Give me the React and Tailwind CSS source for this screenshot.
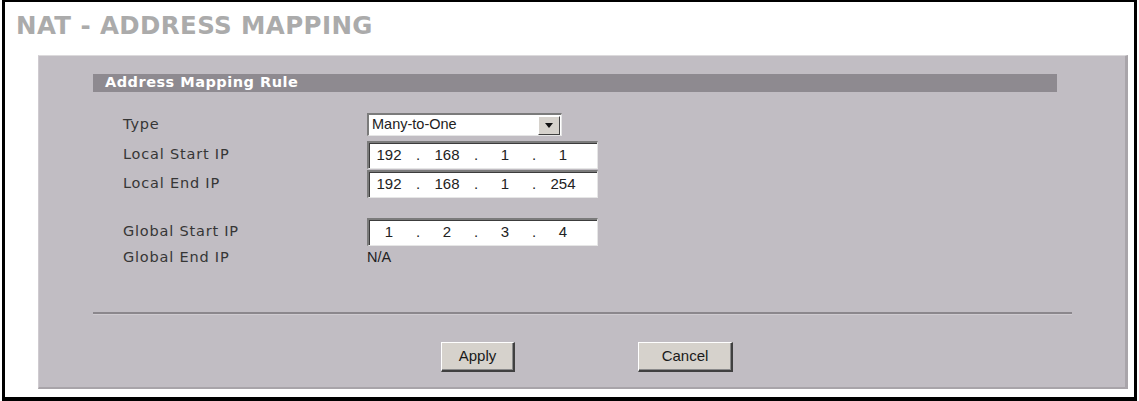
import React from 'react';

const labelFont = { fontFamily: '"DejaVu Sans", Verdana, sans-serif' };
const ctrlFont = { fontFamily: '"Liberation Sans", Arial, sans-serif' };

function IpBox({ parts }) {
    return (
        <div
            className="flex items-center w-[231px] h-[28px] bg-white border-t-2 border-l-2 border-b border-r border-t-[#7b7b7b] border-l-[#7b7b7b] border-b-[#e6e6e6] border-r-[#e6e6e6] shadow-[inset_1px_1px_0_#3c3c3c] pl-[2px] text-[15px] text-[#222]"
            style={ctrlFont}
        >
            {parts.map((p, i) => (
                <React.Fragment key={i}>
                    {i > 0 && <span className="w-[22px] text-center">.</span>}
                    <span className="w-[36px] text-center">{p}</span>
                </React.Fragment>
            ))}
        </div>
    );
}

function Row({ label, children, className = '' }) {
    return (
        <div className={`flex items-center ${className}`}>
            <div className="w-[244px] text-[14.5px] text-[#363636] tracking-[0.8px]" style={labelFont}>
                {label}
            </div>
            {children}
        </div>
    );
}

function Button({ children, width }) {
    return (
        <button
            className={`${width} h-[30px] bg-[#d6d2cc] border-t border-l border-b-2 border-r-2 border-t-white border-l-white border-b-[#404040] border-r-[#404040] shadow-[inset_-1px_-1px_0_#8a8a8a] text-[15px] text-[#1a1a1a]`}
            style={ctrlFont}
        >
            {children}
        </button>
    );
}

export default function App() {
    return (
        <div className="w-[1139px] h-[401px] bg-white">
            <div className="ml-[2px] w-[1135px] h-[401px] border-l-[3px] border-t-2 border-r-[3px] border-b-[4px] border-black bg-white">
                <h1
                    className="pl-[11px] pt-[9px] h-[53px] text-[24.5px] leading-[30px] font-bold text-[#ababab] tracking-[0.4px]"
                    style={labelFont}
                >
                    NAT - ADDRESS MAPPING
                </h1>
                <div className="ml-[33px] w-[1090px] h-[334px] bg-[#c1bdc3] border-t border-l border-t-[#dcdadc] border-l-[#cfcbd0] border-r-[3px] border-r-[#a9a5aa] border-b-2 border-b-[#a8a4a9] pt-[18px]">
                    <div className="ml-[54px] mr-[68px] h-[18px] bg-[#8e8a90] flex items-center pl-[12px]">
                        <span className="text-[14.5px] font-bold text-white tracking-[0.5px]" style={labelFont}>
                            Address Mapping Rule
                        </span>
                    </div>
                    <div className="ml-[84px] mt-[20px] flex flex-col">
                        <Row label="Type" className="h-[25px]">
                            <div
                                className="flex items-center w-[195px] h-[23px] bg-white border-t-2 border-l-2 border-b border-r border-t-[#7b7b7b] border-l-[#7b7b7b] border-b-[#e6e6e6] border-r-[#e6e6e6] text-[14.5px] text-[#222]"
                                style={ctrlFont}
                            >
                                <span className="flex-1 pl-[3px]">Many-to-One</span>
                                <span className="w-[22px] h-[19px] mr-[1px] bg-[#d6d2cc] border-t border-l border-b border-r border-t-white border-l-white border-b-[#404040] border-r-[#404040] flex items-center justify-center">
                                    <svg width="8" height="5" viewBox="0 0 8 5">
                                        <path d="M0 0 H8 L4 5 Z" fill="#111" />
                                    </svg>
                                </span>
                            </div>
                        </Row>
                        <Row label="Local Start IP" className="h-[29px] mt-[3px]">
                            <IpBox parts={['192', '168', '1', '1']} />
                        </Row>
                        <Row label="Local End IP" className="h-[29px]">
                            <IpBox parts={['192', '168', '1', '254']} />
                        </Row>
                        <Row label="Global Start IP" className="h-[29px] mt-[19px]">
                            <IpBox parts={['1', '2', '3', '4']} />
                        </Row>
                        <Row label="Global End IP" className="h-[24px]">
                            <span className="text-[14.5px] text-[#222]" style={ctrlFont}>N/A</span>
                        </Row>
                    </div>
                    <div className="ml-[54px] mr-[53px] mt-[42px] h-[3px] border-t-2 border-t-[#8b878c] border-b border-b-[#cfcbd0]" />
                    <div className="mt-[27px] flex">
                        <div className="ml-[402px]">
                            <Button width="w-[74px]">Apply</Button>
                        </div>
                        <div className="ml-[123px]">
                            <Button width="w-[95px]">Cancel</Button>
                        </div>
                    </div>
                </div>
            </div>
        </div>
    );
}
